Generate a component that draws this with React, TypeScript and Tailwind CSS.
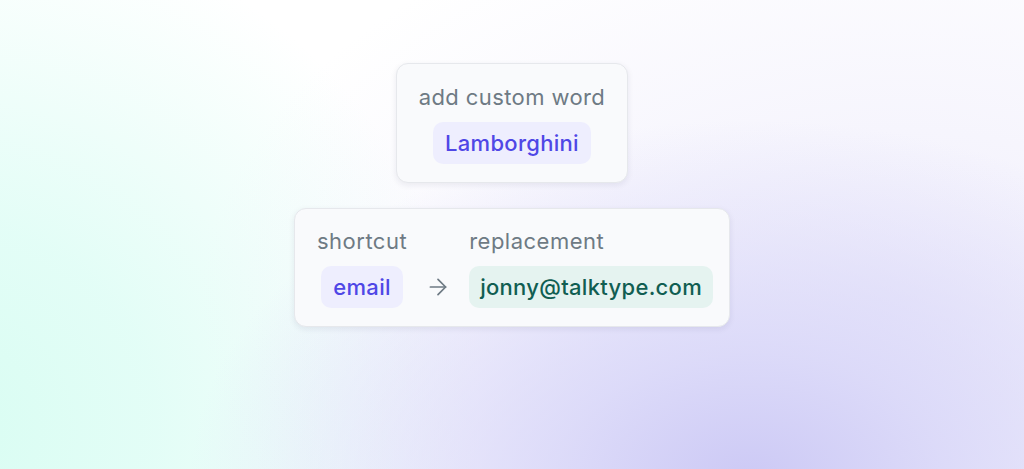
import { ArrowRight } from 'lucide-react';

export default function App() {
  return (
    <div className="relative h-[469px] w-full overflow-hidden bg-white font-['Inter',sans-serif] bg-[radial-gradient(ellipse_560px_360px_at_750px_480px,#ccc9f5_0%,rgba(214,212,248,0.8)_35%,rgba(255,255,255,0)_100%),radial-gradient(ellipse_700px_420px_at_900px_300px,rgba(236,234,251,0.8)_0%,rgba(255,255,255,0)_100%),radial-gradient(ellipse_540px_520px_at_-60px_430px,#d8fdf2_0%,rgba(222,253,245,0.85)_40%,rgba(255,255,255,0)_100%)]">
      <div className="flex flex-col items-center pt-[63px] gap-[25px]">
        <div className="flex flex-col items-center gap-[11px] rounded-xl border border-[#e6e8ec] bg-[#f9fafc] px-[22px] pt-[19px] pb-[18px] shadow-[0_2px_6px_rgba(30,30,60,0.08)]">
          <span className="text-[22px] leading-[28px] tracking-[0.4px] text-[#6e7a84]">add custom word</span>
          <span className="flex h-[42px] items-center rounded-[10px] bg-[#eeeefe] px-[12px] text-[22px] font-medium tracking-[0.3px] text-[#4f47e6]">
            Lamborghini
          </span>
        </div>

        <div className="flex items-start gap-[18px] rounded-xl border border-[#e6e8ec] bg-[#f9fafc] pl-[22px] pr-[16px] pt-[18px] pb-[18px] shadow-[0_2px_6px_rgba(30,30,60,0.08)]">
          <div className="flex flex-col items-center gap-[11px]">
            <span className="text-[22px] leading-[28px] tracking-[0.5px] text-[#6e7a84]">shortcut</span>
            <span className="flex h-[42px] items-center rounded-[10px] bg-[#eeeefe] px-[12px] text-[22px] font-medium tracking-[0.3px] text-[#4f47e6]">
              email
            </span>
          </div>
          <div className="flex h-[42px] items-center mt-[39px]">
            <ArrowRight size={26} strokeWidth={1.6} className="text-[#6e7a84]" />
          </div>
          <div className="flex flex-col items-start gap-[11px]">
            <span className="text-[22px] leading-[28px] tracking-[0.5px] text-[#6e7a84]">replacement</span>
            <span className="flex h-[42px] items-center rounded-[10px] bg-[#e5f3f0] px-[11px] text-[22px] font-medium tracking-[0.3px] text-[#115e52]">
              jonny@talktype.com
            </span>
          </div>
        </div>
      </div>
    </div>
  );
}
